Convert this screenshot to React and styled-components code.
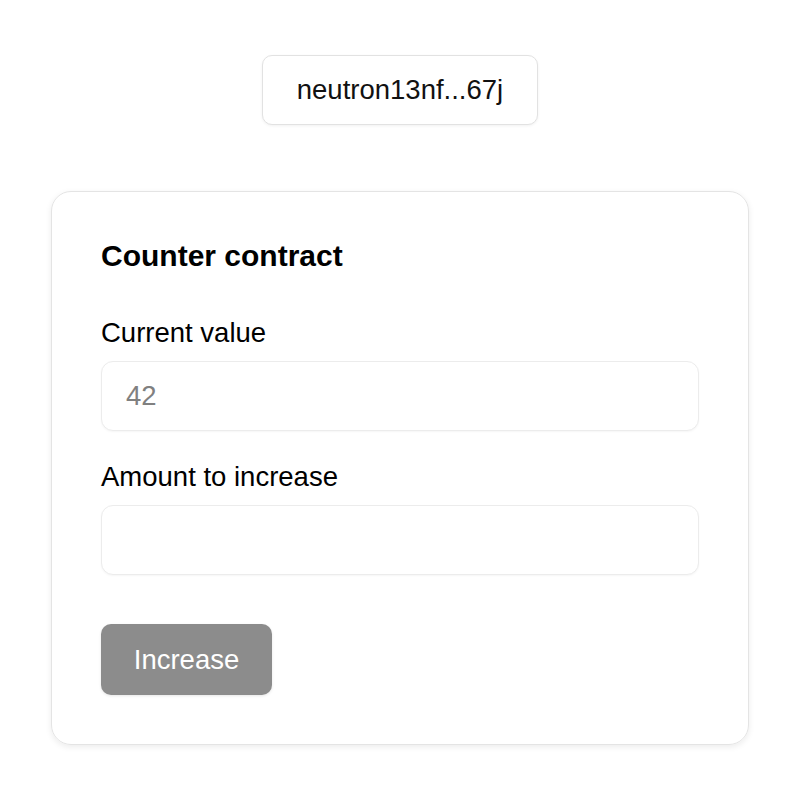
import React, { useState } from 'react';
import styled, { createGlobalStyle } from 'styled-components';

const GlobalStyle = createGlobalStyle`
  body {
    margin: 0;
    background: #ffffff;
    font-family: "Liberation Sans", Arial, Helvetica, sans-serif;
    color: #000;
  }
`;

const Page = styled.div`
  display: flex;
  flex-direction: column;
  align-items: center;
  padding: 55px 51px 40px;
  gap: 66px;
`;

const WalletButton = styled.button`
  width: 276px;
  height: 70px;
  background: #fff;
  border: 1.5px solid #e2e2e2;
  border-radius: 10px;
  box-shadow: 0 1px 3px rgba(0, 0, 0, 0.06);
  font-family: inherit;
  font-size: 27.5px;
  color: #111;
  cursor: pointer;
`;

const Card = styled.div`
  box-sizing: border-box;
  width: 698px;
  padding: 49px;
  border: 1.5px solid #e4e4e4;
  border-radius: 20px;
  box-shadow: 0 2px 6px rgba(0, 0, 0, 0.08);
  display: flex;
  flex-direction: column;
`;

const Title = styled.h2`
  margin: 0 0 48px;
  font-size: 30px;
  line-height: 30px;
  font-weight: bold;
`;

const Label = styled.label`
  display: block;
  font-size: 27.5px;
  line-height: 28px;
  margin-bottom: 14px;
`;

const Input = styled.input`
  box-sizing: border-box;
  width: 100%;
  height: 70px;
  padding: 0 24px;
  border: 1.5px solid #ececec;
  border-radius: 12px;
  background: #fff;
  box-shadow: 0 1px 2px rgba(0, 0, 0, 0.04);
  font-family: inherit;
  font-size: 27.5px;
  color: #111;
  margin-bottom: ${(p) => p.$gap}px;
  outline: none;
  &:disabled {
    color: #808080;
    -webkit-text-fill-color: #808080;
  }
`;

const ActionButton = styled.button`
  align-self: flex-start;
  width: 171px;
  height: 71px;
  border: none;
  border-radius: 10px;
  background: #8c8c8c;
  color: #fff;
  font-family: inherit;
  font-size: 27.5px;
  box-shadow: 0 1px 3px rgba(0, 0, 0, 0.1);
  cursor: not-allowed;
`;

export default function App() {
  const [amount, setAmount] = useState('');

  return (
    <>
      <GlobalStyle />
      <Page>
        <WalletButton>neutron13nf...67j</WalletButton>
        <Card>
          <Title>Counter contract</Title>
          <Label>Current value</Label>
          <Input $gap={32} value="42" disabled readOnly />
          <Label>Amount to increase</Label>
          <Input $gap={49} value={amount} onChange={(e) => setAmount(e.target.value)} />
          <ActionButton disabled={!amount}>Increase</ActionButton>
        </Card>
      </Page>
    </>
  );
}
